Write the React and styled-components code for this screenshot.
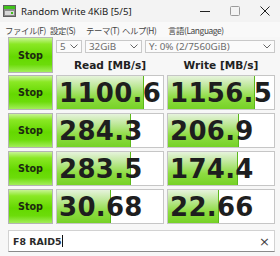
import React from 'react';
import styled, { createGlobalStyle } from 'styled-components';

const GlobalStyle = createGlobalStyle`
    html, body {
        margin: 0;
        padding: 0;
        background: #f7f7f7;
    }
    body {
        width: 280px;
        height: 256px;
        overflow: hidden;
        font-family: "Noto Sans", "Noto Sans CJK JP", sans-serif;
    }
`

const Window = styled.div`
    width: 280px;
    height: 256px;
    display: flex;
    flex-direction: column;
    background: #f7f7f7;
`

const TitleBar = styled.div`
    height: 22px;
    display: flex;
    align-items: center;
    background: #f3f3f3;
`

const AppIcon = styled.svg`
    width: 13px;
    height: 12px;
    margin: 0 5px 0 3px;
`

const Title = styled.div`
    flex: 1;
    font-size: 9.6px;
    color: #1a1a1a;
    white-space: nowrap;
`

const Control = styled.div`
    width: 30px;
    height: 22px;
    display: flex;
    align-items: center;
    justify-content: center;
`

const MenuBar = styled.div`
    height: 15px;
    display: flex;
    align-items: center;
    padding-left: 5px;
    background: #f9f9f9;
    font-family: "Noto Sans CJK JP", sans-serif;
    font-size: 8.4px;
    letter-spacing: -0.4px;
    color: #444;
`

const MenuItem = styled.div`
    flex: 0 0 ${props => props.$w ? props.$w + 'px' : 'auto'};
    white-space: nowrap;
`

const Main = styled.div`
    display: grid;
    grid-template-columns: 45px 108px 108px;
    grid-auto-rows: 35px;
    column-gap: 3px;
    row-gap: 3px;
    padding: 0 0 0 8px;
`

const StopButton = styled.div`
    box-sizing: border-box;
    height: ${props => props.$tall ? 36 : 35}px;
    border: 1px solid #b4b4b4;
    background: linear-gradient(#c8f494 0%, #8ae824 18%, #64d800 55%, #6cdc0a 78%, #a2ee5a 100%);
    display: flex;
    align-items: center;
    justify-content: center;
    font-family: "DejaVu Sans", sans-serif;
    font-weight: bold;
    font-size: 9.6px;
    color: #1c2a10;
`

const TopPanel = styled.div`
    grid-column: 2 / 4;
    display: flex;
    flex-direction: column;
`

const SelectRow = styled.div`
    display: flex;
    gap: 3px;
    margin-top: 3px;
`

const Select = styled.div`
    box-sizing: border-box;
    width: ${props => props.$w}px;
    height: 13px;
    border: 1px solid #c9c9c9;
    background: #fbfbfb;
    display: flex;
    align-items: center;
    justify-content: space-between;
    padding: 0 3px 0 3px;
    font-size: 9.8px;
    color: #6c6c6c;
    white-space: nowrap;
`

const Headers = styled.div`
    display: grid;
    grid-template-columns: 108px 108px;
    column-gap: 3px;
    margin-top: 6px;
`

const Header = styled.div`
    text-align: center;
    font-family: "DejaVu Sans", sans-serif;
    font-weight: bold;
    font-size: 10.6px;
    color: #222;
`

const ValueBox = styled.div`
    position: relative;
    box-sizing: border-box;
    border: 1px solid #c6c6c6;
    background: #ffffff;
    overflow: hidden;
`

const Meter = styled.div`
    position: absolute;
    left: 0;
    top: 0;
    bottom: 0;
    background: linear-gradient(#e6f3dc 0%, #bfe89a 30%, #8edc42 65%, #76d226 100%);
    border-right: 1px solid #5cb81a;
`

const Value = styled.div`
    position: relative;
    height: 100%;
    display: flex;
    align-items: center;
    padding-left: 2px;
    font-family: "DejaVu Sans", sans-serif;
    font-weight: bold;
    font-size: 26px;
    letter-spacing: 0.3px;
    color: #1e1e1e;
`

const Comment = styled.div`
    box-sizing: border-box;
    margin: 6px 5px 0 8px;
    height: 22px;
    border: 1px solid #d2d2d2;
    border-bottom-color: #8a8a8a;
    background: #ffffff;
    display: flex;
    align-items: center;
    padding: 0 4px 0 4px;
    font-family: "DejaVu Sans", sans-serif;
    font-weight: bold;
    font-size: 9.4px;
    color: #2a2a2a;
`

const Caret = styled.span`
    width: 1px;
    height: 12px;
    background: #111;
    margin-left: 1px;
`

const Clear = styled.span`
    margin-left: auto;
    font-family: "DejaVu Sans", sans-serif;
    font-weight: normal;
    font-size: 13px;
    color: #444;
`

const Chevron = () => (
    <svg width="8" height="5" viewBox="0 0 8 5">
        <path d="M0.5 0.5 L4 4 L7.5 0.5" fill="none" stroke="#666" strokeWidth="1" />
    </svg>
)

const rows = [
    ['1100.6', '1156.5'],
    ['284.3', '206.9'],
    ['283.5', '174.4'],
    ['30.68', '22.66'],
];

// log scale, same as the original meter
function meterWidth(v) {
    const f = Math.log10(parseFloat(v) * 10) / 5;
    return Math.max(0, Math.min(1, f)) * 100 + '%';
}

const Cell = ({ value }) => (
    <ValueBox>
        <Meter style={{ width: meterWidth(value) }} />
        <Value>{value}</Value>
    </ValueBox>
)

export default function App() {
    return (
        <Window>
            <GlobalStyle />
            <TitleBar>
                <AppIcon viewBox="0 0 13 12">
                    <rect x="0.5" y="0.5" width="12" height="11" fill="#8a8a8a" stroke="#5e5e5e" />
                    <rect x="1" y="1" width="11" height="3" fill="#3fc21a" />
                    <rect x="2" y="6" width="9" height="4" fill="#d8d8d8" />
                    <rect x="8" y="7" width="2" height="2" fill="#3fc21a" />
                </AppIcon>
                <Title>Random Write 4KiB [5/5]</Title>
                <Control>
                    <svg width="10" height="10" viewBox="0 0 10 10">
                        <path d="M0 5.5 H10" stroke="#222" strokeWidth="1" />
                    </svg>
                </Control>
                <Control>
                    <svg width="10" height="10" viewBox="0 0 10 10">
                        <rect x="0.5" y="0.5" width="9" height="9" rx="1" fill="none" stroke="#9a9a9a" strokeWidth="1" />
                    </svg>
                </Control>
                <Control>
                    <svg width="10" height="10" viewBox="0 0 10 10">
                        <path d="M0.5 0.5 L9.5 9.5 M9.5 0.5 L0.5 9.5" stroke="#222" strokeWidth="1" />
                    </svg>
                </Control>
            </TitleBar>
            <MenuBar>
                <MenuItem $w={45}>ファイル(F)</MenuItem>
                <MenuItem $w={36}>設定(S)</MenuItem>
                <MenuItem $w={36}>テーマ(T)</MenuItem>
                <MenuItem $w={46}>ヘルプ(H)</MenuItem>
                <MenuItem>言語(Language)</MenuItem>
            </MenuBar>
            <Main>
                <StopButton $tall>Stop</StopButton>
                <TopPanel>
                    <SelectRow>
                        <Select $w={26}>5<Chevron /></Select>
                        <Select $w={57}>32GiB<Chevron /></Select>
                        <Select $w={130}>Y: 0% (2/7560GiB)<Chevron /></Select>
                    </SelectRow>
                    <Headers>
                        <Header>Read [MB/s]</Header>
                        <Header>Write [MB/s]</Header>
                    </Headers>
                </TopPanel>
                {rows.map((r, i) => (
                    <React.Fragment key={i}>
                        <StopButton>Stop</StopButton>
                        <Cell value={r[0]} />
                        <Cell value={r[1]} />
                    </React.Fragment>
                ))}
            </Main>
            <Comment>
                F8 RAID5<Caret />
                <Clear>×</Clear>
            </Comment>
        </Window>
    );
}
